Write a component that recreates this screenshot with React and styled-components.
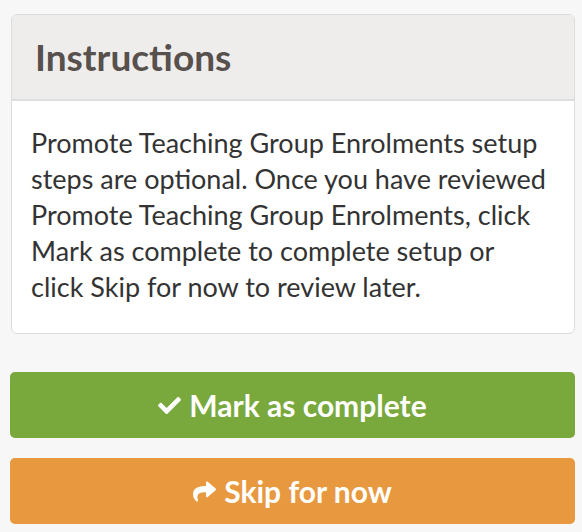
import React from 'react';
import styled, { createGlobalStyle } from 'styled-components';
import { FaCheck, FaShare } from 'react-icons/fa';

const Global = createGlobalStyle`
	body {
		margin: 0;
		background-color: #f7f7f7;
		font-family: 'Lato', 'Liberation Sans', sans-serif;
	}
`;

const Page = styled.div`
	width: 582px;
	padding: 14px 7px 0 11px;
	box-sizing: border-box;
`;

const Panel = styled.div`
	width: 562px;
	background-color: #ffffff;
	border: 1px solid #dcdcdc;
	border-radius: 6px;
	overflow: hidden;
`;

const PanelHeader = styled.div`
	height: 86px;
	display: flex;
	align-items: center;
	padding: 0 23px 2px;
	background-color: #eeedeb;
	border-bottom: 2px solid #dedede;
	box-sizing: border-box;
`;

const Title = styled.h2`
	margin: 0;
	font-size: 37px;
	font-weight: 700;
	color: #57504d;
`;

const PanelBody = styled.div`
	padding: 24px 23px 28px 19px;
	font-size: 27px;
	line-height: 36px;
	color: #333333;
`;

const Actions = styled.div`
	display: flex;
	flex-direction: column;
	gap: 20px;
	margin-top: 38px;
	width: 565px;
	margin-left: -1px;
`;

const Button = styled.button`
	display: flex;
	align-items: center;
	justify-content: center;
	gap: 8px;
	height: 66px;
	border: none;
	border-radius: 5px;
	font-family: inherit;
	font-size: 30px;
	font-weight: 700;
	color: #ffffff;
	background-color: ${({ variant }) => (variant === 'skip' ? '#e8983e' : '#79a83d')};
	cursor: pointer;

	svg {
		font-size: 23px;
	}
`;

const App = () => {
	return (
		<>
			<Global />
			<Page>
				<Panel>
					<PanelHeader>
						<Title>Instructions</Title>
					</PanelHeader>
					<PanelBody>
						Promote Teaching Group Enrolments setup steps are optional. Once you have reviewed Promote
						Teaching Group Enrolments, click Mark as complete to complete setup or click Skip for now to
						review later.
					</PanelBody>
				</Panel>
				<Actions>
					<Button>
						<FaCheck />
						Mark as complete
					</Button>
					<Button variant='skip'>
						<FaShare />
						Skip for now
					</Button>
				</Actions>
			</Page>
		</>
	);
};

export default App;
